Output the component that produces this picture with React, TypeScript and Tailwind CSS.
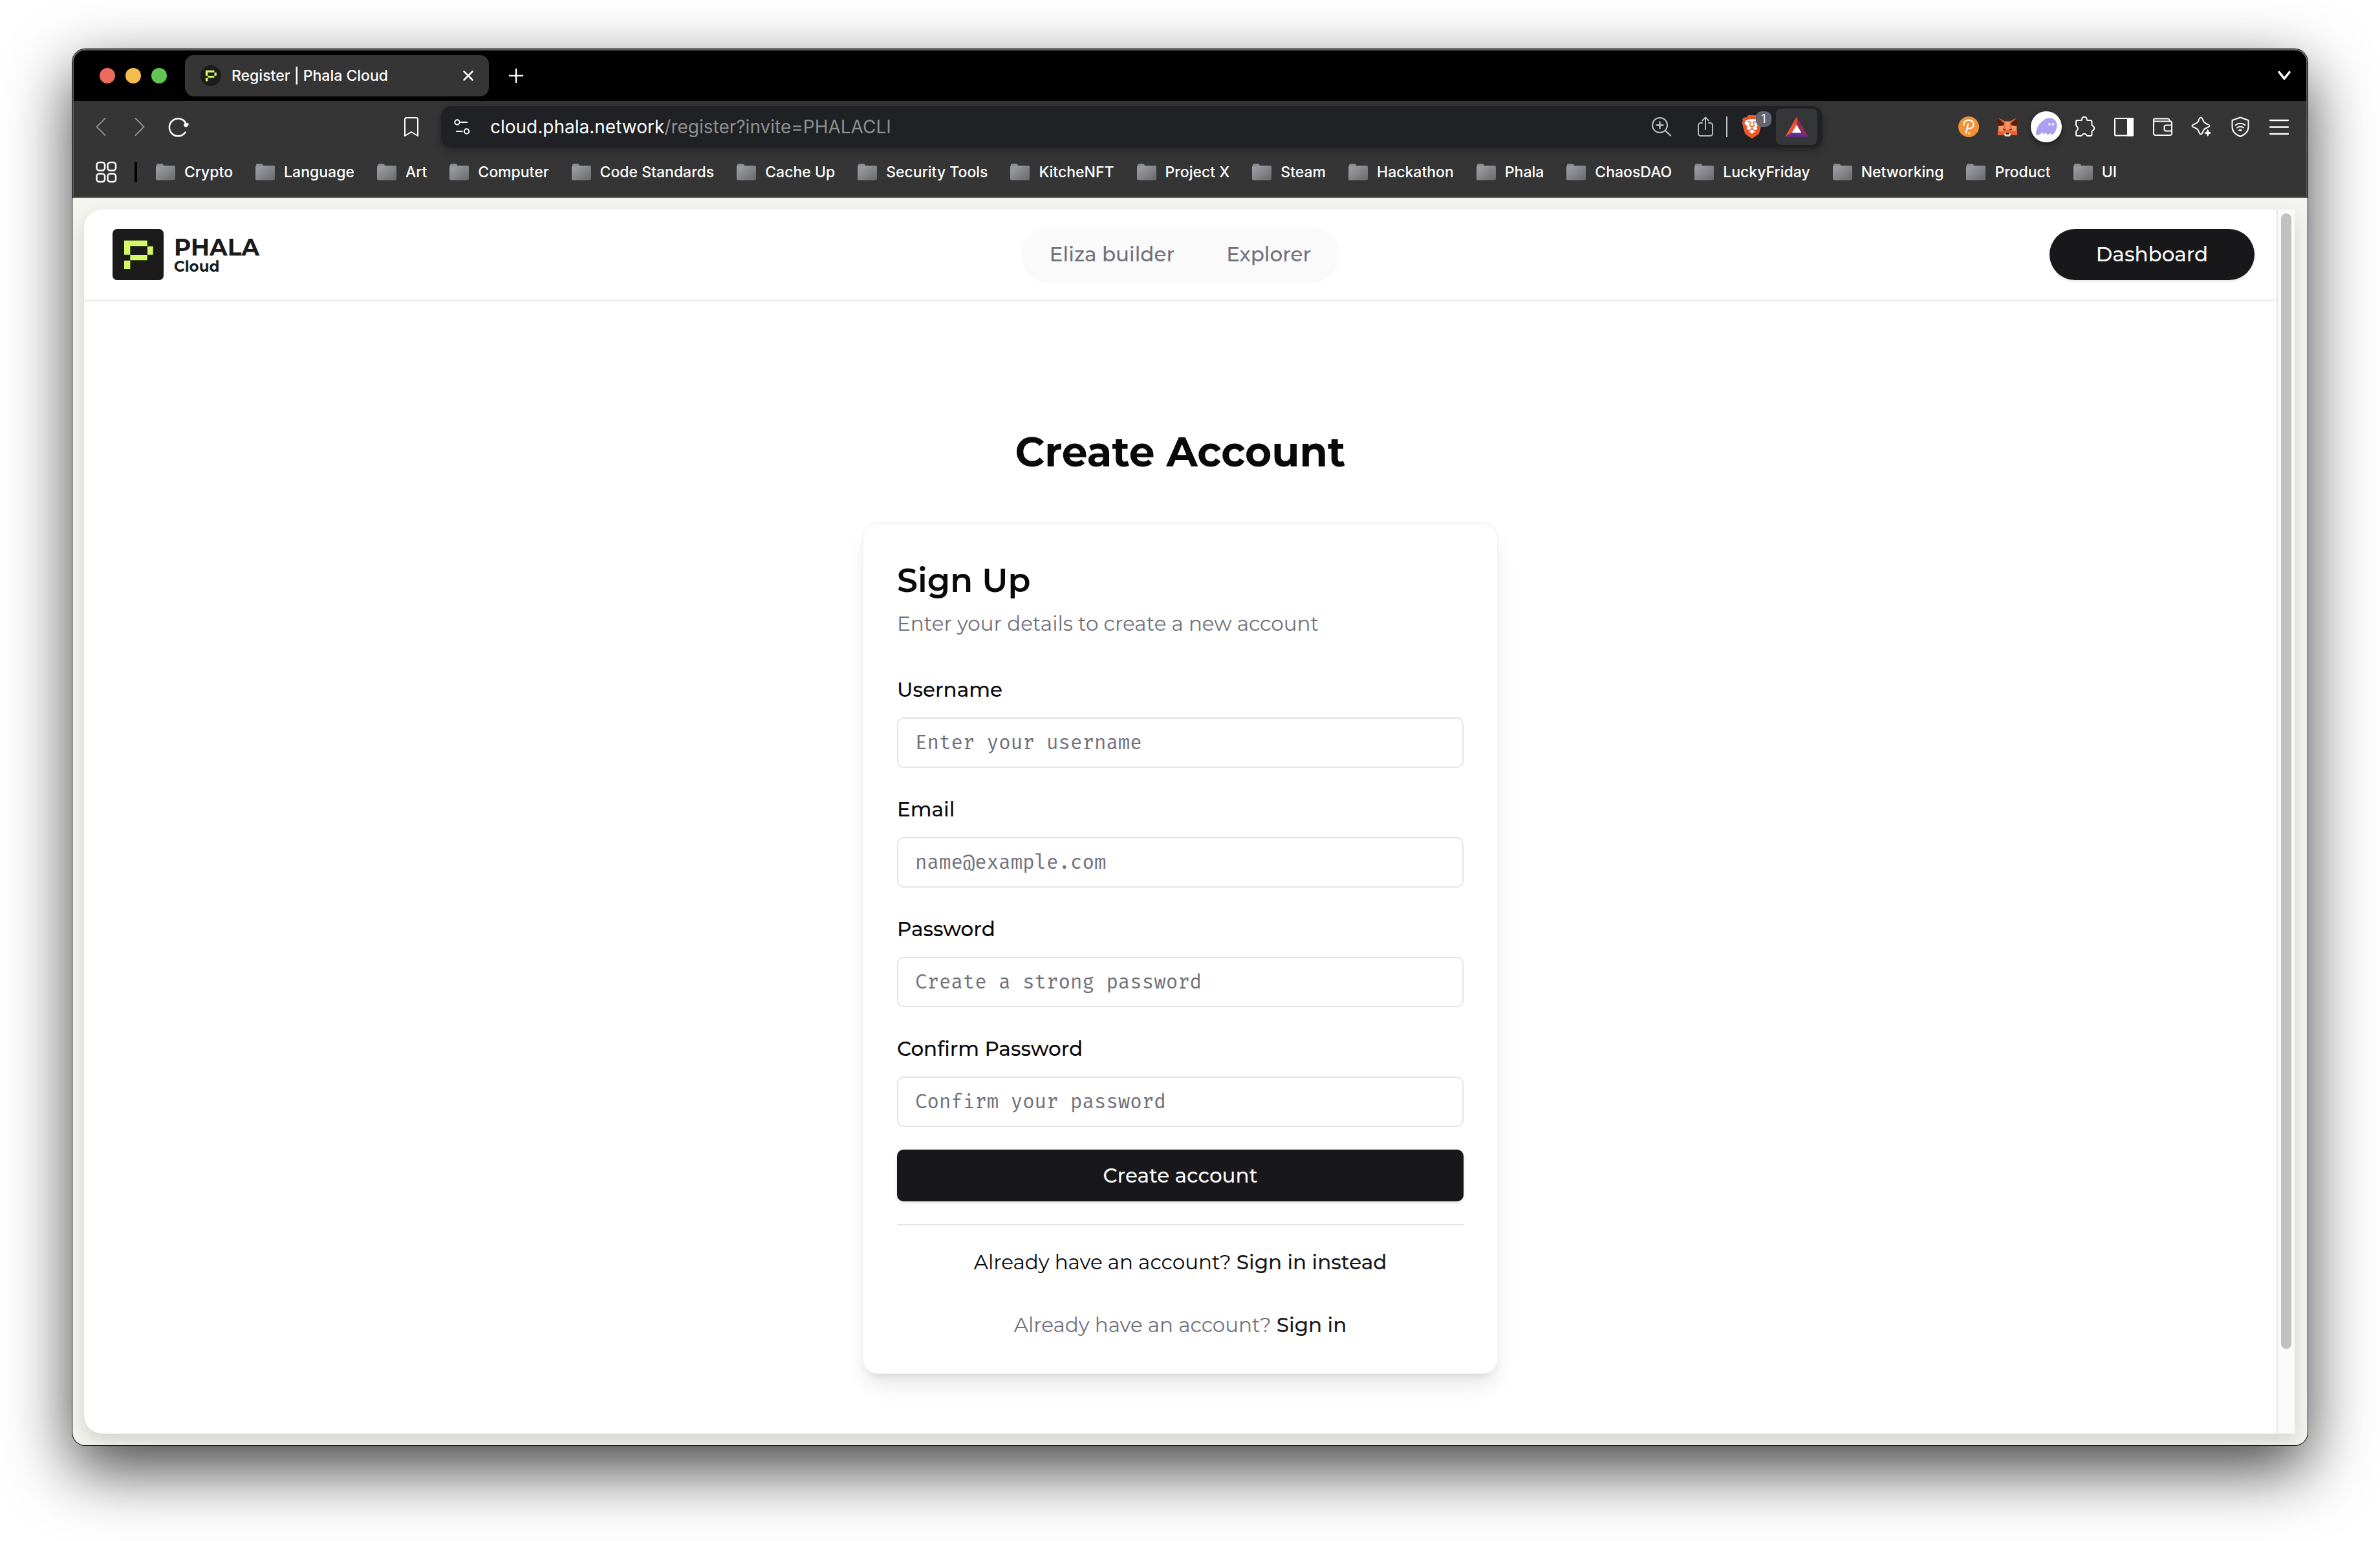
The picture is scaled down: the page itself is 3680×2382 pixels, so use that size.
import React from "react";
import { SiBrave } from "react-icons/si";

const BOOKMARKS = [
  "Crypto", "Language", "Art", "Computer", "Code Standards", "Cache Up",
  "Security Tools", "KitcheNFT", "Project X", "Steam", "Hackathon", "Phala",
  "ChaosDAO", "LuckyFriday", "Networking", "Product", "UI",
];

const FIELDS = [
  { id: "username", label: "Username", type: "text", placeholder: "Enter your username" },
  { id: "email", label: "Email", type: "email", placeholder: "name@example.com" },
  { id: "password", label: "Password", type: "password", placeholder: "Create a strong password" },
  { id: "confirm", label: "Confirm Password", type: "password", placeholder: "Confirm your password" },
];

/* Line icon on a 32px grid whose origin is the centre. */
function Glyph({ children, className = "" }: { children: React.ReactNode; className?: string }) {
  return (
    <svg
      viewBox="-16 -16 32 32"
      className={`size-8 shrink-0 overflow-visible ${className}`}
      fill="none"
      stroke="currentColor"
      strokeWidth="2"
      strokeLinecap="round"
      strokeLinejoin="round"
      aria-hidden="true"
    >
      {children}
    </svg>
  );
}

function IconButton({ label, className = "", children }: { label: string; className?: string; children: React.ReactNode }) {
  return (
    <button type="button" aria-label={label} className={`flex h-12 w-[60px] shrink-0 items-center justify-center ${className}`}>
      {children}
    </button>
  );
}

function PhalaMark() {
  return (
    <g fill="#d5f966">
      <path d="M54 53H161V79H82V119H54Z" />
      <path d="M162 80H188V119H162Z" />
      <path d="M82 120H161V145H82Z" />
      <path d="M54 146H82V186H54Z" />
    </g>
  );
}

function Folder() {
  return (
    <svg viewBox="0 0 30 26" className="h-[26px] w-[30px] shrink-0" aria-hidden="true">
      <defs>
        <linearGradient id="folder" x1="0" y1="0" x2="1" y2="1">
          <stop offset="0.2" stopColor="#97989f" />
          <stop offset="1" stopColor="#68696a" />
        </linearGradient>
      </defs>
      <path d="M1 4V2Q1 0 3 0H9Q11 0 11.500 1.500L12 3Z" fill="#8b8b8b" />
      <rect y="3" width="30" height="22.500" rx="2" fill="url(#folder)" />
    </svg>
  );
}

function TabStrip() {
  return (
    <div className="flex h-[78px] items-center bg-black pl-10 pr-[18px]">
      <div className="flex gap-4">
        <button type="button" aria-label="Close window" className="size-6 rounded-full bg-[#ed6a5e]" />
        <button type="button" aria-label="Minimize window" className="size-6 rounded-full bg-[#f4be4f]" />
        <button type="button" aria-label="Zoom window" className="size-6 rounded-full bg-[#61c554]" />
      </div>
      <div className="ml-7 flex h-16 w-[470px] items-center rounded-[14px] bg-[#353535] pl-6 pr-4">
        <svg viewBox="0 0 32 32" className="size-8" aria-hidden="true">
          <circle cx="16" cy="16" r="16" fill="#1c1c1c" />
          <svg x="1" y="1" width="30" height="30" viewBox="0 0 237 237"><PhalaMark /></svg>
        </svg>
        <span className="ml-4 flex-1 text-[23px] font-medium text-white">Register | Phala Cloud</span>
        <button type="button" aria-label="Close tab" className="text-white">
          <Glyph><path d="M-6.500 -6.500L6.500 6.500M6.500 -6.500L-6.500 6.500" strokeWidth="2.500" /></Glyph>
        </button>
      </div>
      <button type="button" aria-label="New tab" className="ml-[26px] text-white">
        <Glyph><path d="M-10 0H10M0 -10V10" strokeWidth="2.500" /></Glyph>
      </button>
      <button type="button" aria-label="Search tabs" className="ml-auto text-white">
        <Glyph><path d="M-8 -5.500L0 4.500L8 -5.500" strokeWidth="3.500" strokeLinejoin="miter" /></Glyph>
      </button>
    </div>
  );
}

function AddressBar() {
  return (
    <div className="flex h-16 w-[2136px] min-w-0 items-center rounded-[16px] bg-[#202124] pl-4 pr-2 shadow-[0_4px_12px_rgba(0,0,0,0.35)]">
      <button type="button" aria-label="View site information" className="text-white">
        <Glyph>
          <circle cx="-7" cy="-7" r="3.700" />
          <path d="M-1 -7H8M-8 7H1" />
          <circle cx="7.500" cy="7" r="3.700" />
        </Glyph>
      </button>
      <p className="ml-7 flex-1 truncate text-[28px] leading-9 text-white">
        cloud.phala.network<span className="text-[#8e8f91]">/register?invite=PHALACLI</span>
      </p>
      <button type="button" aria-label="Zoom" className="mr-9 text-[#c4c5c6]">
        <Glyph>
          <circle cx="-2.500" cy="-2.500" r="11.500" />
          <path d="M6 6L14 13.500M-7.500 -2.500H2.500M-2.500 -7.500V2.500" strokeWidth="2.300" />
        </Glyph>
      </button>
      <button type="button" aria-label="Share this page" className="text-[#b9babb]">
        <Glyph>
          <path d="M-5 -6H-7.500A3.500 3.500 0 0 0 -11 -2.500V10.500A3.500 3.500 0 0 0 -7.500 14H7.500A3.500 3.500 0 0 0 11 10.500V-2.500A3.500 3.500 0 0 0 7.500 -6H5" />
          <path d="M0 4V-14M-5 -9.500L0 -14.500L5 -9.500" />
        </Glyph>
      </button>
      <span className="ml-4 h-8 w-[2px] bg-[#c4c5c6]" />
      <button type="button" aria-label="Brave Shields" className="relative ml-5 flex h-9 w-9 items-center justify-center">
        <span className="absolute inset-x-1.5 inset-y-1.5 rounded-lg bg-white" />
        <SiBrave className="relative size-9 text-[#ee5a29]" />
        <span className="absolute -right-3 -top-1.5 flex size-6 items-center justify-center rounded-[9px] bg-[#626573] text-lg leading-6 text-white">
          1
        </span>
      </button>
      <button type="button" aria-label="Brave Rewards" className="ml-[19px] flex h-14 w-16 items-center justify-center rounded-lg bg-[#353638]">
        <svg viewBox="659 88 108 95" className="h-8 w-9" aria-hidden="true">
          <path d="M713 88V125L691 163L659 183Z" fill="#f0542f" />
          <path d="M713 88V125L735 163L767 183Z" fill="#97285f" />
          <path d="M659 183L691 163H735L767 183Z" fill="#5f2e91" />
          <path d="M713 125L735 163H691Z" fill="#fff" />
        </svg>
      </button>
    </div>
  );
}

function Fox() {
  return (
    <svg viewBox="204 92 96 93" className="h-[31px] w-8" aria-hidden="true">
      <path d="M208 136L214 126L240 112H264L290 126L296 136L293 152L297 172L294 177L270 174L264 181H240L234 174L210 177L207 172L211 152Z" fill="#ee6b32" />
      <path d="M208 95L240 114L233 132L214 135L206 118Z" fill="#5c1d0b" />
      <path d="M296 95L264 114L271 132L290 135L298 118Z" fill="#5c1d0b" />
      <path d="M208 95L243 112L240 124Z" fill="#e8682e" />
      <path d="M296 95L261 112L264 124Z" fill="#e8682e" />
      <path d="M240 112H264L260 150L244 150Z" fill="#f6946b" />
      <path d="M212 135L232 130L242 152L228 158L208 157Z" fill="#f59468" />
      <path d="M292 135L272 130L262 152L276 158L296 157Z" fill="#f59468" />
      <path d="M207 157H228L236 174L210 177L206 172Z" fill="#e8602d" />
      <path d="M297 157H276L268 174L294 177L298 172Z" fill="#e8602d" />
      <path d="M231 144L243 150L240 154L232 151Z" fill="#54200f" />
      <path d="M273 144L261 150L264 154L272 151Z" fill="#54200f" />
      <path d="M236 171L244 165H260L268 171L260 181H244Z" fill="#e3e6e8" />
      <path d="M246 165H258L260 170L257 172H247L244 170Z" fill="#231a18" />
    </svg>
  );
}

function Extensions() {
  return (
    <div className="flex items-center text-white">
      <IconButton label="Polkadot.js">
        <svg viewBox="0 0 96 96" className="size-8" fill="none" stroke="#fff" strokeWidth="7" strokeLinecap="round" aria-hidden="true">
          <circle cx="48" cy="48" r="48" fill="#f29135" stroke="none" />
          <path d="M25 41C23 27 34 17 48 17C62 17 71 26 71 37C71 48 62 56 49 56" />
          <path d="M45 36L36 76" />
          <circle cx="50" cy="78" r="4.500" fill="#fff" stroke="none" />
        </svg>
      </IconButton>
      <IconButton label="MetaMask"><Fox /></IconButton>
      <IconButton label="Phantom">
        <svg viewBox="0 0 144 144" className="size-12 shrink-0 rounded-full bg-white shadow-[0_3px_8px_rgba(0,0,0,0.5)]" aria-hidden="true">
          <path d="M24 101C24 82 42 49 67 36C90 26 121 31 121 64C121 88 110 103 102 108C97 111 91 108 91 100C87 108 81 109 77 107C72 105 71 101 72 97C66 105 59 107 55 103C53 101 53 98 54 94C47 105 38 112 31 112C26 112 24 107 24 101Z" fill="#ab9ff2" />
          <ellipse cx="87" cy="60" rx="5" ry="6" fill="#fff" />
          <ellipse cx="103" cy="60" rx="5" ry="6" fill="#fff" />
        </svg>
      </IconButton>
      <IconButton label="Extensions">
        <Glyph>
          <path d="M-14 -8a2 2 0 0 1 2 -2h5.500c1 0 1.500 -.5 1.500 -1.500a3.800 3.800 0 0 1 7.600 0c0 1 .5 1.500 1.500 1.500h4.400a2 2 0 0 1 2 2v5c0 1 .5 1.200 1 1.400a4 4 0 0 1 0 7.500c-.5 .2 -1 .5 -1 1.400v4.700a2 2 0 0 1 -2 2h-5c-.6 0 -1 -.6 -1.200 -1a4 4 0 0 0 -7.200 0c-.2 .5 -.6 1 -1.200 1h-5.900a2 2 0 0 1 -2 -2v-4.500c0 -.7 .4 -1 1 -1.300a4.200 4.200 0 0 0 0 -7c-.6 -.4 -1 -.7 -1 -1.300z" />
        </Glyph>
      </IconButton>
      <IconButton label="Sidebar">
        <Glyph>
          <rect x="-14" y="-13" width="28" height="26.500" rx="1" />
          <path d="M6 -13H14V13.500H6Z" fill="currentColor" />
        </Glyph>
      </IconButton>
      <IconButton label="Wallet">
        <Glyph>
          <path d="M-14 -8V-10.500A2 2 0 0 1 -12 -12.500H7A4 4 0 0 1 11 -9" />
          <path d="M-14 -8.500H11.500A2.500 2.500 0 0 1 14 -6V10.500A2.500 2.500 0 0 1 11.500 13H-11.500A2.500 2.500 0 0 1 -14 10.500Z" />
          <path d="M14 -2.500H5A2.500 2.500 0 0 0 2.500 0V4A2.500 2.500 0 0 0 5 6.500H14" />
        </Glyph>
      </IconButton>
      <IconButton label="Leo AI">
        <Glyph>
          <path d="M-1 -14.500C1 -14.500 2 -11 3 -8.500C4 -6.500 6 -5.500 8 -4.500C10.500 -3.500 12.500 -3 12.500 -1.500C12.500 0 10.500 .5 8 1.500C6 2.500 4 3.500 3 5.500C2 8 1 11.500 -1 11.500C-3 11.500 -4 8 -5 5.500C-6 3.500 -8 2.500 -10 1.500C-12.500 .5 -14.500 0 -14.500 -1.500C-14.500 -3 -12.500 -3.500 -10 -4.500C-8 -5.500 -6 -6.500 -5 -8.500C-4 -11 -3 -14.500 -1 -14.500Z" />
          <path d="M9.700 4.500L11.200 7.900L14.700 9.400L11.200 10.900L9.700 14.400L8.200 10.900L4.700 9.400L8.200 7.900Z" fill="currentColor" strokeWidth="1" />
        </Glyph>
      </IconButton>
      <IconButton label="VPN">
        <Glyph>
          <path d="M0 -14.500L12.500 -10V0C12.500 7.500 6.500 12.500 0 15C-6.500 12.500 -12.500 7.500 -12.500 0V-10Z" />
          <path d="M-7.500 -2.500A12 12 0 0 1 7.500 -2.500M-5 1.500A8 8 0 0 1 5 1.500" />
          <path d="M-2.500 5A4 4 0 0 1 2.500 5L0 6.500Z" fill="currentColor" strokeWidth="1" />
        </Glyph>
      </IconButton>
      <IconButton label="Menu">
        <Glyph><path d="M-14 -10H14M-14 .5H14M-14 11H14" strokeWidth="2.300" /></Glyph>
      </IconButton>
    </div>
  );
}

function Toolbar() {
  return (
    <div className="flex h-20 items-center justify-between bg-[#353535] px-3">
      <div className="flex items-center text-white">
        <IconButton label="Back" className="text-[#8f8f8f]"><Glyph><path d="M6.500 -13L-6.500 0L6.500 13" /></Glyph></IconButton>
        <IconButton label="Forward" className="text-[#8f8f8f]"><Glyph><path d="M-6.500 -13L6.500 0L-6.500 13" /></Glyph></IconButton>
        <IconButton label="Reload">
          <Glyph>
            <path d="M11 -6A13.500 13.500 0 1 0 10.500 8.500" strokeWidth="2.500" />
            <path d="M14.500 -5V-3L12 -.5L9.500 -1.500L9 -4L12 -5Z" fill="currentColor" strokeWidth="2" />
          </Glyph>
        </IconButton>
      </div>
      <div className="ml-[104px] flex items-center gap-4 text-white">
        <IconButton label="Bookmark this page">
          <Glyph><path d="M-10 14V-11.500A2.500 2.500 0 0 1 -7.500 -14H7.500A2.500 2.500 0 0 1 10 -11.500V14L0 8Z" /></Glyph>
        </IconButton>
        <AddressBar />
      </div>
      <Extensions />
    </div>
  );
}

function BookmarksBar() {
  return (
    <nav aria-label="Bookmarks" className="flex h-[68px] items-center bg-[#353535] pb-2 pl-[34px]">
      <button type="button" aria-label="All bookmarks" className="text-white">
        <Glyph>
          <rect x="-14.500" y="-15" width="12.500" height="12.500" rx="4" strokeWidth="2.500" />
          <rect x="2.500" y="-15" width="12.500" height="12.500" rx="4" strokeWidth="2.500" />
          <rect x="-14.500" y="2.500" width="12.500" height="12.500" rx="4" strokeWidth="2.500" />
          <rect x="2.500" y="2.500" width="12.500" height="12.500" rx="4" strokeWidth="2.500" />
        </Glyph>
      </button>
      <span className="ml-7 mr-[29px] h-8 w-1 rounded-full bg-black" />
      <ul className="flex gap-[35px]">
        {BOOKMARKS.map((name) => (
          <li key={name}>
            <a href="#" className="flex items-center gap-[14px] whitespace-nowrap text-[23px] font-medium text-white">
              <Folder />
              {name}
            </a>
          </li>
        ))}
      </ul>
    </nav>
  );
}

function SiteHeader() {
  return (
    <header className="grid h-[141px] grid-cols-[1fr_auto_1fr] items-center border-b-2 border-[#eeeeef] px-[34px] shadow-[0_2px_4px_rgba(0,0,0,0.03)]">
      <a href="#" className="flex items-center gap-4 pl-2.5 text-[#1b1b1b]">
        <svg viewBox="0 0 237 237" className="size-[79px]" aria-hidden="true">
          <rect width="237" height="237" rx="21" fill="#1b1b1b" />
          <PhalaMark />
        </svg>
        <span className="flex flex-col font-bold">
          <span className="text-4xl leading-9">PHALA</span>
          <span className="text-[23px] leading-6">Cloud</span>
        </span>
      </a>
      <nav aria-label="Main" className="flex h-[88px] items-center gap-20 rounded-full bg-[#fafafa] px-11 text-[31px] font-medium text-[#71717a]">
        <a href="#">Eliza builder</a>
        <a href="#">Explorer</a>
      </nav>
      <a href="#" className="flex h-[79px] w-[317px] items-center justify-center justify-self-end rounded-full bg-[#18181b] text-[31px] font-medium text-[#fafafa] shadow-[0_2px_4px_rgba(0,0,0,0.1)]">
        Dashboard
      </a>
    </header>
  );
}

function SignUpCard() {
  return (
    <section className="mt-[73px] w-full max-w-[984px] rounded-3xl border-2 border-[#f4f4f5] bg-white p-[52px] shadow-[0_22px_34px_-6px_rgba(0,0,0,0.1),0_8px_14px_-8px_rgba(0,0,0,0.12)]">
      <h2 className="text-[51px] font-semibold leading-[70px]">Sign Up</h2>
      <p className="mt-2.5 text-[31px] leading-[44px] text-[#71717a]">Enter your details to create a new account</p>
      <form className="mt-16 flex flex-col" onSubmit={(e) => e.preventDefault()}>
        <div className="flex flex-col gap-12">
          {FIELDS.map((f) => (
            <div key={f.id} className="flex flex-col gap-[27px]">
              <label htmlFor={f.id} className="text-[31px] font-medium leading-8">{f.label}</label>
              <input
                id={f.id}
                type={f.type}
                placeholder={f.placeholder}
                className="h-[78px] w-full rounded-[10px] border-2 border-[#e4e4e7] bg-white px-[26px] font-['Fira_Code','Fira_Mono','Liberation_Mono',monospace] text-[30px] placeholder:text-[#71717a]"
              />
            </div>
          ))}
        </div>
        <button type="submit" className="mt-[35px] h-20 rounded-[10px] bg-[#18181b] text-[31px] font-medium text-[#fafafa] shadow-[0_2px_5px_rgba(0,0,0,0.12)]">
          Create account
        </button>
      </form>
      <p className="mt-[35px] border-t-2 border-[#e4e4e7] pt-[35px] text-center text-[31px] leading-[44px]">
        Already have an account? <a href="#" className="font-medium text-[#18181b]">Sign in instead</a>
      </p>
      <p className="mt-[53px] text-center text-[31px] leading-[44px] text-[#71717a]">
        Already have an account? <a href="#" className="font-medium text-[#18181b]">Sign in</a>
      </p>
    </section>
  );
}

export default function App() {
  return (
    <div className="flex min-h-screen bg-white px-28 pb-[148px] pt-[76px] font-['Inter',sans-serif]">
      <div className="flex min-w-0 flex-1 flex-col overflow-hidden rounded-[20px] bg-[#f4f5ef] shadow-[0_0_0_1px_#000,0_36px_100px_rgba(0,0,0,0.75)]">
        <div className="rounded-t-[20px] border-2 border-[#5f5f5f] bg-[#353535]">
          <div className="overflow-hidden rounded-t-[18px]">
            <TabStrip />
            <Toolbar />
            <BookmarksBar />
          </div>
        </div>
        <div className="flex flex-1 py-[18px] pl-[18px] pr-5">
          <div className="flex flex-1 overflow-hidden rounded-l-[28px] bg-white font-['Montserrat','Inter',sans-serif] text-[#09090b] shadow-[0_12px_30px_rgba(0,0,0,0.14)]">
            <div className="flex min-w-0 flex-1 flex-col">
              <SiteHeader />
              <main className="flex flex-1 flex-col items-center pt-[198px]">
                <h1 className="text-[63px] font-bold leading-[72px]">Create Account</h1>
                <SignUpCard />
              </main>
            </div>
            <div className="flex w-7 flex-col border-l-2 border-[#e8e8e8] bg-[#fafafa] px-[5px] py-1.5">
              <div className="w-4 flex-[14] rounded-full bg-[#c1c1c1]" />
              <div className="flex-1" />
            </div>
          </div>
        </div>
      </div>
    </div>
  );
}
